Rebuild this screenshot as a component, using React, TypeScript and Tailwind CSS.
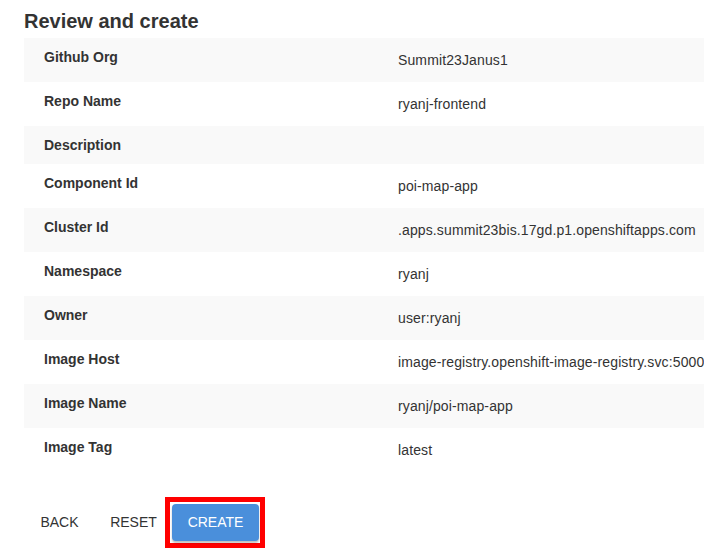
import React from "react";

const rows: [string, string][] = [
  ["Github Org", "Summit23Janus1"],
  ["Repo Name", "ryanj-frontend"],
  ["Description", ""],
  ["Component Id", "poi-map-app"],
  ["Cluster Id", ".apps.summit23bis.17gd.p1.openshiftapps.com"],
  ["Namespace", "ryanj"],
  ["Owner", "user:ryanj"],
  ["Image Host", "image-registry.openshift-image-registry.svc:5000"],
  ["Image Name", "ryanj/poi-map-app"],
  ["Image Tag", "latest"],
];

export default function App() {
  return (
    <div
      className="w-[704px] h-[560px] overflow-hidden bg-white text-[#333333]"
      style={{ fontFamily: '"Liberation Sans", Arial, Helvetica, sans-serif' }}
    >
      <div className="pt-[9px] pl-6">
        <h2 className="text-[20px] leading-[24px] font-bold text-[#333333]">Review and create</h2>
        <div className="mt-[5px]">
          {rows.map(([label, value], i) => (
            <div
              key={label}
              className={`flex items-start w-[680px] ${i % 2 === 0 ? "bg-[#f9f9f9]" : "bg-white"}`}
            >
              <div className="w-[374px] shrink-0 pl-5 h-[38px] flex items-center text-[14px] font-bold">
                {label}
              </div>
              {value ? (
                <div className="h-[44px] flex items-center text-[14px] tracking-[0.12px] whitespace-nowrap">
                  {value}
                </div>
              ) : null}
            </div>
          ))}
        </div>
      </div>
      <div className="flex items-center pl-6 mt-[32px]">
        <button className="w-[71px] h-[37px] text-[14px] text-[#333333] uppercase">Back</button>
        <button className="w-[77px] h-[37px] text-[14px] text-[#333333] uppercase">Reset</button>
        <div className="relative">
          <div className="absolute -left-[7px] -top-[7px] -right-[6px] -bottom-[7px] border-[5px] border-[#ff0000]" />
          <button className="relative w-[87px] h-[37px] rounded-[4px] bg-[#4a8fdb] text-white text-[14px] uppercase shadow-[0_2px_2px_rgba(0,0,0,0.25)]">
            Create
          </button>
        </div>
      </div>
    </div>
  );
}
